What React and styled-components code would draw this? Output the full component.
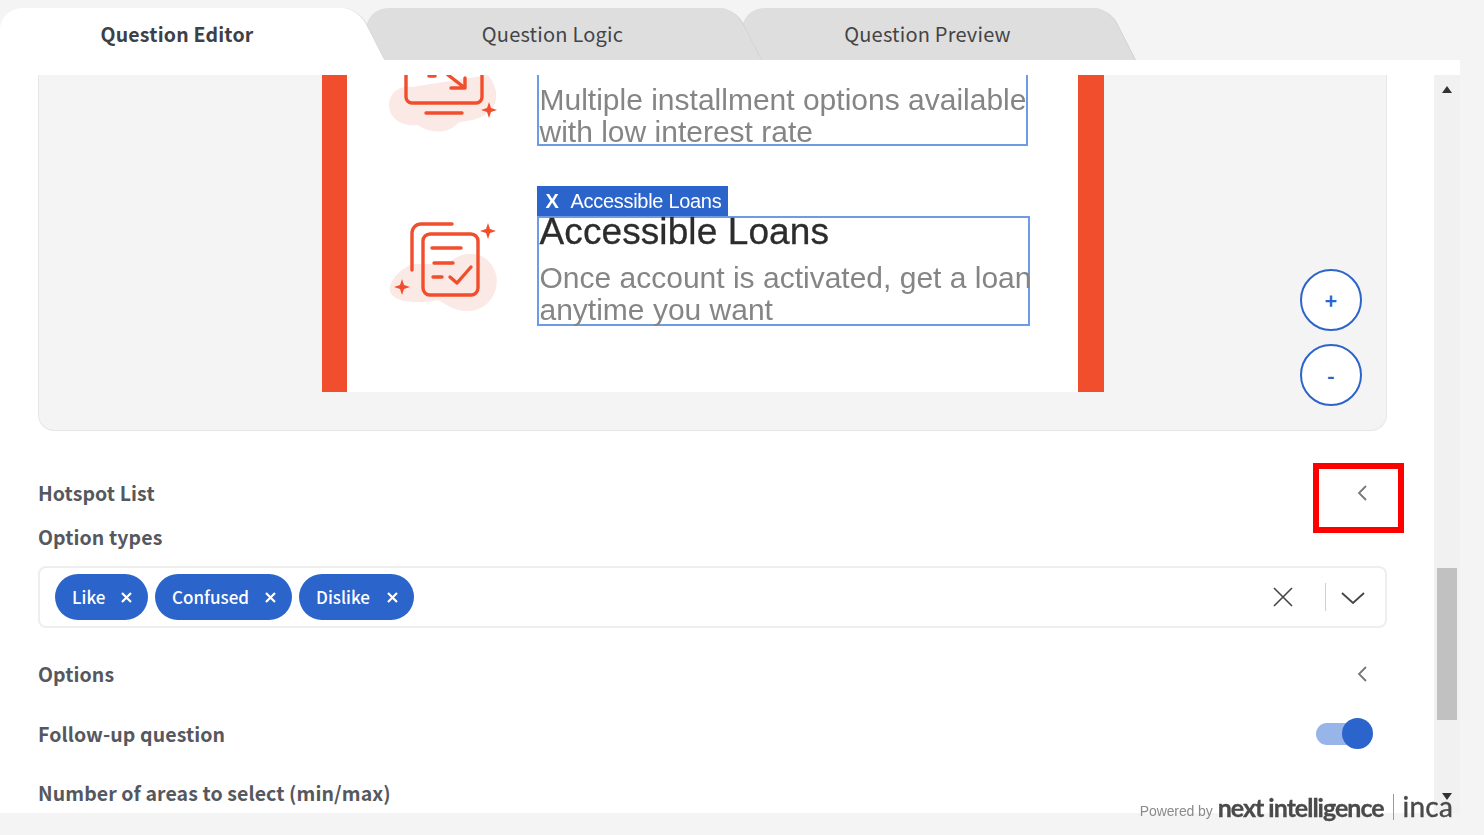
import React from "react";
import styled, { createGlobalStyle } from "styled-components";

const SANS = `"Noto Sans CJK JP", "Noto Sans", sans-serif`;
const BLUE = "#2b64cb";

const GlobalStyle = createGlobalStyle`
  html, body {
    margin: 0;
    padding: 0;
    background: #f4f4f4;
  }
  * {
    box-sizing: border-box;
  }
`;

const Shell = styled.div`
  position: relative;
  width: 1484px;
  height: 835px;
  overflow: hidden;
  padding-top: 8px;
  font-family: ${SANS};
`;

const TabBar = styled.div`
  display: flex;
  height: 52px;
`;

const Tab = styled.div`
  position: relative;
  z-index: ${(p) => p.$layer};
  flex: none;
  width: ${(p) => p.$width}px;
  margin-right: ${(p) => p.$overlap}px;
  padding-right: ${(p) => (p.$active ? 18 : 10)}px;
  display: flex;
  align-items: center;
  justify-content: center;
  font-size: ${(p) => (p.$active ? 19.5 : 20)}px;
  font-weight: ${(p) => (p.$active ? 600 : 400)};
  color: ${(p) => (p.$active ? "#3c4048" : "#444")};
  letter-spacing: 0.2px;

  &::before {
    content: "";
    position: absolute;
    z-index: -1;
    top: 0;
    bottom: 0;
    left: 0;
    right: 30px;
    background: ${(p) => (p.$active ? "#fff" : "#dedede")};
    border-top-left-radius: 22px;
  }

  &::after {
    content: "";
    position: absolute;
    z-index: -1;
    top: 0;
    bottom: 0;
    right: 0;
    width: 60px;
    background: ${(p) => (p.$active ? "#fff" : "#dedede")};
    border-top-right-radius: 16px;
    border-right: 1px solid ${(p) => (p.$active ? "#d4d4d4" : "#cfcfcf")};
    transform: skewX(27deg);
  }
`;

const TabLabel = styled.span`
  position: relative;
  line-height: 1;
`;

const Sheet = styled.div`
  position: relative;
  width: 1460px;
  height: 753px;
  background: #fff;
  padding-top: 15px;
`;

const Scroller = styled.div`
  display: flex;
  height: 738px;
`;

const Content = styled.div`
  flex: 1;
  min-width: 0;
  overflow: hidden;
  padding: 0 47px 0 38px;
`;

const ImagePanel = styled.div`
  position: relative;
  height: 356px;
  background: #f4f4f4;
  border: 1px solid #e6e6e6;
  border-top: none;
  border-radius: 0 0 16px 16px;
  display: flex;
  justify-content: center;
`;

const Slide = styled.div`
  width: 782px;
  height: 317px;
  background: #fff;
  display: flex;
  border-left: 25px solid #f04e2c;
  border-right: 26px solid #f04e2c;
  filter: blur(0.4px);
`;

const SlideBody = styled.div`
  flex: 1;
  min-width: 0;
  display: flex;
  flex-direction: column;
`;

const Feature = styled.div`
  display: flex;
  align-items: flex-start;
  margin-top: ${(p) => p.$top || 0}px;
  padding-left: 41px;
`;

const FeatureIcon = styled.svg`
  flex: none;
  width: 110px;
  height: ${(p) => p.$h}px;
  margin-top: ${(p) => p.$top || 0}px;
  margin-right: 39px;
`;

const HotspotColumn = styled.div`
  display: flex;
  flex-direction: column;
  align-items: flex-start;
`;

const HotspotTag = styled.div`
  height: 30px;
  width: 191px;
  background: ${BLUE};
  color: #fff;
  display: flex;
  align-items: center;
  padding-left: 9px;
  gap: 12px;
  font-family: "Liberation Sans", Arial, sans-serif;
  font-size: 20px;
  letter-spacing: -0.3px;
`;

const HotspotBox = styled.div`
  width: ${(p) => p.$width}px;
  height: ${(p) => p.$height}px;
  border: 2px solid #6f9be4;
  border-top: ${(p) => (p.$open ? "none" : "2px solid #6f9be4")};
  padding: ${(p) => (p.$open ? "9px" : "0")} 0 0 1px;
  white-space: nowrap;
  font-family: "Liberation Sans", Arial, sans-serif;
`;

const SlideTitle = styled.div`
  font-size: 37px;
  line-height: 28px;
  letter-spacing: 0.1px;
  color: #2c2c2c;
  margin-bottom: 16px;
  -webkit-text-stroke: 0.3px #2c2c2c;
`;

const SlideText = styled.div`
  font-size: 30px;
  line-height: 32px;
  color: #858585;
`;

const ZoomStack = styled.div`
  position: absolute;
  right: 24px;
  bottom: 24px;
  display: flex;
  flex-direction: column;
  gap: 13px;
`;

const ZoomButton = styled.button`
  width: 62px;
  height: 62px;
  padding: 0;
  border-radius: 50%;
  border: 2.5px solid ${BLUE};
  background: #fff;
  color: ${BLUE};
  font-family: ${SANS};
  font-size: 21px;
  font-weight: 700;
  line-height: 1;
`;

const Row = styled.div`
  position: relative;
  height: 44px;
  margin-top: ${(p) => p.$top || 0}px;
  display: flex;
  align-items: center;
  justify-content: space-between;
  padding-right: ${(p) => p.$pad || 0}px;
`;

const RowLabel = styled.span`
  font-size: 19.5px;
  font-weight: 600;
  line-height: 1;
  color: #55585e;
  letter-spacing: 0.1px;
`;

const Marker = styled.div`
  position: absolute;
  top: -8px;
  right: -17px;
  width: 91px;
  height: 70px;
  border: 6px solid #ff0000;
`;

const SelectBox = styled.div`
  height: 62px;
  margin-top: 7px;
  border: 2px solid #eeeeee;
  border-radius: 8px;
  padding: 0 20px 0 15px;
  display: flex;
  align-items: center;
  gap: 7px;
`;

const Chip = styled.div`
  height: 46px;
  width: ${(p) => p.$width}px;
  padding: 0 16px 2px 17px;
  border-radius: 23px;
  background: ${BLUE};
  color: #fff;
  display: flex;
  align-items: center;
  justify-content: space-between;
  font-size: 17px;
  font-weight: 500;
  line-height: 1;

  svg {
    margin-top: 2px;
  }
`;

const SelectControls = styled.div`
  margin-left: auto;
  display: flex;
  align-items: center;
`;

const ControlDivider = styled.div`
  width: 1px;
  height: 28px;
  margin: 0 15px 0 32px;
  background: #cfcfcf;
`;

const Toggle = styled.div`
  position: relative;
  width: 55px;
  height: 22px;
  border-radius: 11px;
  background: #97b5e8;
`;

const ToggleKnob = styled.div`
  position: absolute;
  top: -5px;
  right: -2px;
  width: 31px;
  height: 31px;
  border-radius: 50%;
  background: ${BLUE};
`;

const ScrollTrack = styled.div`
  position: relative;
  flex: none;
  width: 26px;
  background: #f1f1f1;
`;

const ScrollThumb = styled.div`
  position: absolute;
  top: 493px;
  left: 3px;
  width: 20px;
  height: 152px;
  background: #c1c1c1;
`;

const ScrollArrow = styled.div`
  position: absolute;
  left: 8px;
  ${(p) => (p.$down ? "bottom: 13px;" : "top: 11px;")}
  width: 0;
  height: 0;
  border-left: 5px solid transparent;
  border-right: 5px solid transparent;
  ${(p) => (p.$down ? "border-top: 7px solid #333;" : "border-bottom: 7px solid #333;")}
`;

const Branding = styled.div`
  position: absolute;
  z-index: 1;
  right: 31px;
  bottom: 13px;
  display: flex;
  align-items: center;
  color: #4a4a4a;
  font-family: Lato, sans-serif;
  filter: blur(0.5px);
`;

const PoweredBy = styled.span`
  font-family: "Liberation Sans", Arial, sans-serif;
  font-size: 14px;
  letter-spacing: -0.1px;
  color: #8a8a8a;
  margin: 8px 5px 0 0;
`;

const BrandName = styled.span`
  font-size: 25px;
  font-weight: 700;
  line-height: 28px;
  letter-spacing: -1px;
  -webkit-text-stroke: 0.3px #4a4a4a;
`;

const BrandRule = styled.span`
  width: 1px;
  height: 26px;
  margin: 0 9px 0 9px;
  background: #9a9a9a;
`;

const BrandInca = styled.span`
  font-size: 28px;
  font-weight: 400;
  line-height: 28px;
  letter-spacing: 0.2px;
  margin-bottom: 2px;
  -webkit-text-stroke: 0.4px #4a4a4a;
`;

function Sparkle({ x, y, r = 8 }) {
  const k = r * 0.25;
  return (
    <path
      fill="#f04e2c"
      d={`M${x} ${y - r}L${x + k} ${y - k}L${x + r} ${y}L${x + k} ${y + k}L${x} ${y + r}L${x - k} ${y + k}L${x - r} ${y}L${x - k} ${y - k}Z`}
    />
  );
}

function MonitorIcon() {
  return (
    <FeatureIcon $h={60} viewBox="0 0 110 60">
      <path fill="#fbe9e5" d="M1 28C3 14 15 11 24 12L100 0C110 12 112 28 100 38C90 46 78 45 70 48C60 60 40 58 30 50C15 52 0 44 1 28Z" />
      <g fill="none" stroke="#f04e2c" strokeWidth="3.4" strokeLinecap="round" strokeLinejoin="round">
        <path d="M18 -5V22a6 6 0 0 0 6 6H88a6 6 0 0 0 6-6V-5" />
        <path d="M38 38H74" />
        <path d="M60 0L77 13M63 13H77V3" />
        <path d="M41 1H47" />
      </g>
      <Sparkle x={101} y={35} />
    </FeatureIcon>
  );
}

function ChecklistIcon() {
  return (
    <FeatureIcon $h={94} $top={34} viewBox="0 0 110 94">
      <path fill="#fbe9e5" d="M2 66C6 54 16 48 24 44L60 44C72 30 100 28 108 54C112 72 100 92 78 91C66 91 58 84 50 80C34 84 -2 84 2 66Z" />
      <g fill="none" stroke="#f04e2c" strokeWidth="3.4" strokeLinecap="round" strokeLinejoin="round">
        <path d="M24 50V13a9 9 0 0 1 9-9H64" />
        <rect x="35" y="14" width="55" height="61" rx="7" />
        <path d="M44 28H73M46 43H65M45 57H54" />
        <path d="M62 57L69 63L83 47" />
      </g>
      <Sparkle x={100} y={11} />
      <Sparkle x={14} y={67} />
    </FeatureIcon>
  );
}

function Chevron() {
  return (
    <svg width="10" height="16" viewBox="0 0 10 16" fill="none" stroke="#777" strokeWidth="1.8">
      <path d="M9 1L2 8L9 15" />
    </svg>
  );
}

function ChipClose() {
  return (
    <svg width="11" height="11" viewBox="0 0 11 11" fill="none" stroke="#fff" strokeWidth="2.2">
      <path d="M1 1L10 10M10 1L1 10" />
    </svg>
  );
}

function Chips() {
  const chips = [
    { label: "Like", width: 93 },
    { label: "Confused", width: 137 },
    { label: "Dislike", width: 115 },
  ];
  return chips.map((chip) => (
    <Chip key={chip.label} $width={chip.width}>
      {chip.label}
      <ChipClose />
    </Chip>
  ));
}

export default function App() {
  return (
    <Shell>
      <GlobalStyle />
      <TabBar>
        <Tab $active $layer={3} $width={372} $overlap={-6}>
          <TabLabel>Question Editor</TabLabel>
        </Tab>
        <Tab $layer={2} $width={383} $overlap={-7}>
          <TabLabel>Question Logic</TabLabel>
        </Tab>
        <Tab $layer={1} $width={381} $overlap={0}>
          <TabLabel>Question Preview</TabLabel>
        </Tab>
      </TabBar>

      <Sheet>
        <Scroller>
          <Content>
            <ImagePanel>
              <Slide>
                <SlideBody>
                  <Feature>
                    <MonitorIcon />
                    <HotspotBox $open $width={491} $height={71}>
                      <SlideText>Multiple installment options available</SlideText>
                      <SlideText>with low interest rate</SlideText>
                    </HotspotBox>
                  </Feature>
                  <Feature $top={40}>
                    <ChecklistIcon />
                    <HotspotColumn>
                      <HotspotTag>
                        <strong>X</strong>
                        <span>Accessible Loans</span>
                      </HotspotTag>
                      <HotspotBox $width={493} $height={110}>
                        <SlideTitle>Accessible Loans</SlideTitle>
                        <SlideText>Once account is activated, get a loan</SlideText>
                        <SlideText>anytime you want</SlideText>
                      </HotspotBox>
                    </HotspotColumn>
                  </Feature>
                </SlideBody>
              </Slide>
              <ZoomStack>
                <ZoomButton>+</ZoomButton>
                <ZoomButton>-</ZoomButton>
              </ZoomStack>
            </ImagePanel>

            <Row $top={40} $pad={20}>
              <RowLabel>Hotspot List</RowLabel>
              <Chevron />
              <Marker />
            </Row>
            <Row>
              <RowLabel>Option types</RowLabel>
            </Row>
            <SelectBox>
              <Chips />
              <SelectControls>
                <svg width="20" height="20" viewBox="0 0 20 20" fill="none" stroke="#444" strokeWidth="1.6">
                  <path d="M1 1L19 19M19 1L1 19" />
                </svg>
                <ControlDivider />
                <svg width="24" height="14" viewBox="0 0 24 14" fill="none" stroke="#444" strokeWidth="1.8">
                  <path d="M1 3L12 13L23 3" />
                </svg>
              </SelectControls>
            </SelectBox>
            <Row $top={24} $pad={20}>
              <RowLabel>Options</RowLabel>
              <Chevron />
            </Row>
            <Row $top={16} $pad={16}>
              <RowLabel>Follow-up question</RowLabel>
              <Toggle>
                <ToggleKnob />
              </Toggle>
            </Row>
            <Row $top={15}>
              <RowLabel>Number of areas to select (min/max)</RowLabel>
            </Row>
          </Content>
          <ScrollTrack>
            <ScrollArrow />
            <ScrollThumb />
            <ScrollArrow $down />
          </ScrollTrack>
        </Scroller>
      </Sheet>

      <Branding>
        <PoweredBy>Powered by</PoweredBy>
        <BrandName>next intelligence</BrandName>
        <BrandRule />
        <BrandInca>inca</BrandInca>
      </Branding>
    </Shell>
  );
}
